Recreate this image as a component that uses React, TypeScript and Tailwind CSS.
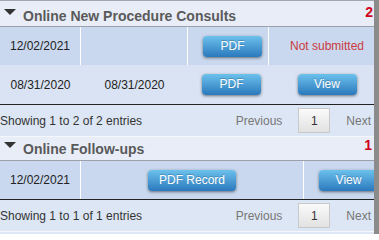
import React from 'react';

const btn =
  "h-[21px] rounded-[4px] bg-gradient-to-b from-[#6cc1ec] to-[#2a79bd] text-white text-[12px] leading-[21px] text-center shadow-[0_1px_3px_rgba(0,0,0,0.5)] [text-shadow:0_-1px_0_rgba(0,0,0,0.2)]";

function Header({ title, count, top, badgeFix }: { title: string; count: string; top: string; badgeFix?: string }) {
  return (
    <div className={`flex items-start w-[374px] bg-[#e8edf8] border-b border-[#9ca1a9] pl-[4px] pr-[1px] ${top}`}>
      <div className="mt-[1px] w-0 h-0 border-l-[6px] border-r-[6px] border-t-[6px] border-l-transparent border-r-transparent border-t-[#333]" />
      <span className="ml-[7px] text-[14px] leading-[16px] font-bold text-[#5a5a5a]">{title}</span>
      <span className={`ml-auto -mt-[4px] text-[14px] leading-[16px] font-bold text-[#d0021b] ${badgeFix ?? ''}`}>{count}</span>
    </div>
  );
}

function Footer({ text }: { text: string }) {
  return (
    <div className="flex items-center h-[32px] w-[374px] bg-[#dde6f4] border-b border-[#f3f6fb]">
      <span className="text-[12px] leading-[14px] text-[#333]">{text}</span>
      <div className="ml-auto flex items-center pr-[3px]">
        <span className="text-[12px] text-[#777]">Previous</span>
        <span className="mx-[16px] w-[32px] h-[25px] flex items-center justify-center border border-[#c9c9c9] bg-gradient-to-b from-[#fafafa] to-[#e2e2e2] text-[12px] text-[#333]">
          1
        </span>
        <span className="text-[12px] text-[#777]">Next</span>
      </div>
    </div>
  );
}

export default function App() {
  return (
    <div className="flex w-[379px] h-[234px] overflow-hidden bg-[#dde6f4] font-['Liberation_Sans',Arial,sans-serif]">
      <div className="w-[374px] shrink-0 overflow-hidden">
        <div className="h-px w-[374px] bg-[#a3a7ad]" />
        <Header title="Online New Procedure Consults" count="2" top="h-[26px] pt-[7px]" />

        {/* consults table */}
        <div className="w-[385px] border-b border-[#222]">
          <div className="flex h-[38px] bg-[#c9d8ee] text-[12px] text-[#222]">
            <div className="w-[81px] shrink-0 border-r border-white flex items-center justify-center">12/02/2021</div>
            <div className="w-[107px] shrink-0 border-r border-white" />
            <div className="w-[81px] shrink-0 border-r border-white flex items-center pl-[15px]">
              <div className={`${btn} w-[59px]`}>PDF</div>
            </div>
            <div className="flex-1 flex items-center justify-center text-[#cc3a42]">Not submitted</div>
          </div>
          <div className="flex h-[39px] bg-[#d9e3f3] text-[12px] text-[#222]">
            <div className="w-[81px] shrink-0 flex items-center justify-center">08/31/2020</div>
            <div className="w-[107px] shrink-0 flex items-center justify-center">08/31/2020</div>
            <div className="w-[81px] shrink-0 flex items-center pl-[14px]">
              <div className={`${btn} w-[59px]`}>PDF</div>
            </div>
            <div className="flex-1 flex items-center justify-center">
              <div className={`${btn} w-[59px]`}>View</div>
            </div>
          </div>
        </div>
        <Footer text="Showing 1 to 2 of 2 entries" />

        <Header title="Online Follow-ups" count="1" top="h-[24px] pt-[4px]" badgeFix="mr-[1px]" />

        {/* follow-ups table */}
        <div className="w-[393px] border-b border-[#222]">
          <div className="flex h-[38px] bg-[#c9d8ee] text-[12px] text-[#222]">
            <div className="w-[81px] shrink-0 border-r border-white flex items-center justify-center">12/02/2021</div>
            <div className="w-[223px] shrink-0 border-r border-white flex items-center justify-center">
              <div className={`${btn} px-[11px]`}>PDF Record</div>
            </div>
            <div className="flex-1 flex items-center pl-[15px]">
              <div className={`${btn} w-[59px]`}>View</div>
            </div>
          </div>
        </div>
        <Footer text="Showing 1 to 1 of 1 entries" />
      </div>
      <div className="w-[5px] shrink-0 bg-[#8b8b8b]" />
    </div>
  );
}
